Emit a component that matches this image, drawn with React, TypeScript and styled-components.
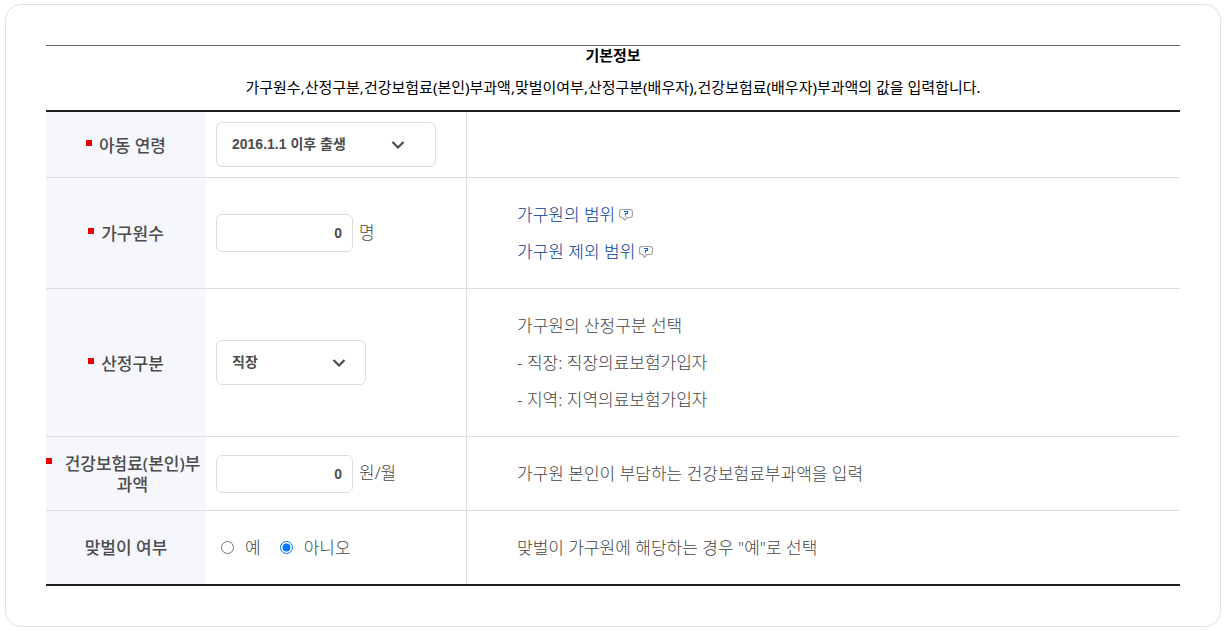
import React from "react";
import styled, { createGlobalStyle } from "styled-components";

const GlobalStyle = createGlobalStyle`
  *, *::before, *::after { box-sizing: border-box; }
  body {
    margin: 0;
    background: #fff;
    color: #444;
    font-family: "Noto Sans", "Noto Sans CJK KR", sans-serif;
    font-size: 17px;
    font-weight: 300;
  }
`;

const Card = styled.main`
  margin: 4px 4px 4px 5px;
  padding: 40px;
  border: 1px solid #e0e0e0;
  border-radius: 16px;
`;

const Table = styled.table`
  width: 100%;
  table-layout: fixed;
  border-spacing: 0;
  border-top: 2px solid #231f20;
  border-bottom: 2px solid #231f20;
`;

const Caption = styled.caption`
  padding-bottom: 13px;
  border-top: 1px solid #666;
  color: #000;
  font-size: 15px;
  font-weight: 400;
  line-height: 20px;
  text-align: center;
`;

const CaptionTitle = styled.strong`
  display: block;
  font-weight: 700;
  line-height: 18px;
`;

const CaptionText = styled.p`
  margin: 13px 0 0;
`;

const LabelCol = styled.col`
  width: 160px;
`;

const FieldCol = styled.col`
  width: 261px;
`;

const Row = styled.tr`
  & + & > * {
    border-top: 1px solid #ddd;
  }
`;

const HeadCell = styled.th`
  padding: 0;
  background: #f5f7fd;
  color: #4c4c4c;
  font-weight: 500;
  line-height: 21px;
  text-align: center;
  word-break: break-all;
`;

const Label = styled.label`
  display: inline-flex;
  align-items: flex-start;
  gap: 7px;
  vertical-align: middle;
`;

const Required = styled.span`
  flex: none;
  width: 6px;
  height: 6px;
  margin-top: 5px;
  background: #e60000;
`;

const FieldCell = styled.td`
  padding: 10px;
  border-right: 1px solid #ddd;
`;

const NoteCell = styled.td`
  padding: 18px 50px;
  line-height: 37px;
`;

const Note = styled.p`
  margin: 0;
`;

const Field = styled.div`
  display: flex;
  align-items: center;
  gap: 6px;
  line-height: 21px;
`;

const Unit = styled.span`
  padding-bottom: 2px;
`;

const SelectBox = styled.div<{ $wide?: boolean }>`
  display: grid;
  grid-template-columns: 1fr auto;
  align-items: center;
  width: ${(p) => (p.$wide ? 220 : 150)}px;

  svg {
    grid-area: 1 / 2;
    margin-right: ${(p) => (p.$wide ? 31 : 20)}px;
    pointer-events: none;
  }
`;

const Select = styled.select`
  grid-area: 1 / 1 / 2 / 3;
  width: 100%;
  height: 45px;
  padding: 0 15px 2px;
  border: 1px solid #ddd;
  border-radius: 6px;
  appearance: none;
  background: #fff;
  color: #4c4c4c;
  font: 600 14px "Liberation Sans", "Noto Sans CJK KR", sans-serif;
`;

const NumberInput = styled.input`
  width: 137px;
  height: 38px;
  padding: 0 10px;
  border: 1px solid #ddd;
  border-radius: 6px;
  background: #fff;
  color: #4c4c4c;
  font: 700 14px "Liberation Sans", "Noto Sans CJK KR", sans-serif;
  text-align: right;
`;

const RadioGroup = styled.div`
  display: flex;
  gap: 19px;
  padding-left: 5px;
`;

const RadioLabel = styled.label`
  display: flex;
  align-items: center;
  gap: 11px;
  line-height: 21px;
`;

const Radio = styled.input`
  width: 13px;
  height: 13px;
  margin: 0;
`;

const HelpLink = styled.a`
  display: inline-flex;
  align-items: center;
  gap: 4px;
  color: #003c9b;
  text-decoration: none;
`;

const Chevron = () => (
  <svg width="14" height="10" viewBox="0 0 14 10" fill="none" aria-hidden="true">
    <path d="M1.5 2 L7 7.5 L12.5 2" stroke="#4c4c4c" strokeWidth="2.2" />
  </svg>
);

const HelpIcon = () => (
  <svg width="14" height="14" viewBox="0 0 14 14" fill="none" aria-hidden="true">
    <path
      d="M3 1.500h8Q13.500 1.500 13.500 4v3Q13.500 9.500 11 9.500H8L5.500 12 3.500 9.500H3Q.5 9.500.5 7V4Q.5 1.500 3 1.500z"
      fill="#fff"
      stroke="#a0a0a0"
      strokeWidth="1.2"
    />
    <path d="M5 3.500h3.500v2H6.500V7M6.500 7.500v1" stroke="#0068c8" strokeWidth="1.2" />
  </svg>
);

export default function App() {
  return (
    <>
      <GlobalStyle />
      <Card>
        <Table>
          <Caption>
            <CaptionTitle>기본정보</CaptionTitle>
            <CaptionText>
              가구원수,산정구분,건강보험료(본인)부과액,맞벌이여부,산정구분(배우자),건강보험료(배우자)부과액의 값을 입력합니다.
            </CaptionText>
          </Caption>
          <colgroup>
            <LabelCol />
            <FieldCol />
            <col />
          </colgroup>
          <tbody>
            <Row>
              <HeadCell scope="row">
                <Label htmlFor="child-age">
                  <Required />
                  <span>아동 연령</span>
                </Label>
              </HeadCell>
              <FieldCell>
                <SelectBox $wide>
                  <Select id="child-age">
                    <option>2016.1.1 이후 출생</option>
                  </Select>
                  <Chevron />
                </SelectBox>
              </FieldCell>
              <td />
            </Row>
            <Row>
              <HeadCell scope="row">
                <Label htmlFor="members">
                  <Required />
                  <span>가구원수</span>
                </Label>
              </HeadCell>
              <FieldCell>
                <Field>
                  <NumberInput id="members" type="text" inputMode="numeric" defaultValue="0" />
                  <Unit>명</Unit>
                </Field>
              </FieldCell>
              <NoteCell>
                <Note>
                  <HelpLink href="#range">
                    가구원의 범위
                    <HelpIcon />
                  </HelpLink>
                </Note>
                <Note>
                  <HelpLink href="#excluded">
                    가구원 제외 범위
                    <HelpIcon />
                  </HelpLink>
                </Note>
              </NoteCell>
            </Row>
            <Row>
              <HeadCell scope="row">
                <Label htmlFor="category">
                  <Required />
                  <span>산정구분</span>
                </Label>
              </HeadCell>
              <FieldCell>
                <SelectBox>
                  <Select id="category">
                    <option>직장</option>
                    <option>지역</option>
                  </Select>
                  <Chevron />
                </SelectBox>
              </FieldCell>
              <NoteCell>
                <Note>가구원의 산정구분 선택</Note>
                <Note>- 직장: 직장의료보험가입자</Note>
                <Note>- 지역: 지역의료보험가입자</Note>
              </NoteCell>
            </Row>
            <Row>
              <HeadCell scope="row">
                <Label htmlFor="premium">
                  <Required />
                  <span>건강보험료(본인)부과액</span>
                </Label>
              </HeadCell>
              <FieldCell>
                <Field>
                  <NumberInput id="premium" type="text" inputMode="numeric" defaultValue="0" />
                  <Unit>원/월</Unit>
                </Field>
              </FieldCell>
              <NoteCell>
                <Note>가구원 본인이 부담하는 건강보험료부과액을 입력</Note>
              </NoteCell>
            </Row>
            <Row>
              <HeadCell scope="row" id="dual-income">
                맞벌이 여부
              </HeadCell>
              <FieldCell>
                <RadioGroup role="radiogroup" aria-labelledby="dual-income">
                  <RadioLabel>
                    <Radio type="radio" name="dual" />
                    예
                  </RadioLabel>
                  <RadioLabel>
                    <Radio type="radio" name="dual" defaultChecked />
                    아니오
                  </RadioLabel>
                </RadioGroup>
              </FieldCell>
              <NoteCell>
                <Note>맞벌이 가구원에 해당하는 경우 "예"로 선택</Note>
              </NoteCell>
            </Row>
          </tbody>
        </Table>
      </Card>
    </>
  );
}
